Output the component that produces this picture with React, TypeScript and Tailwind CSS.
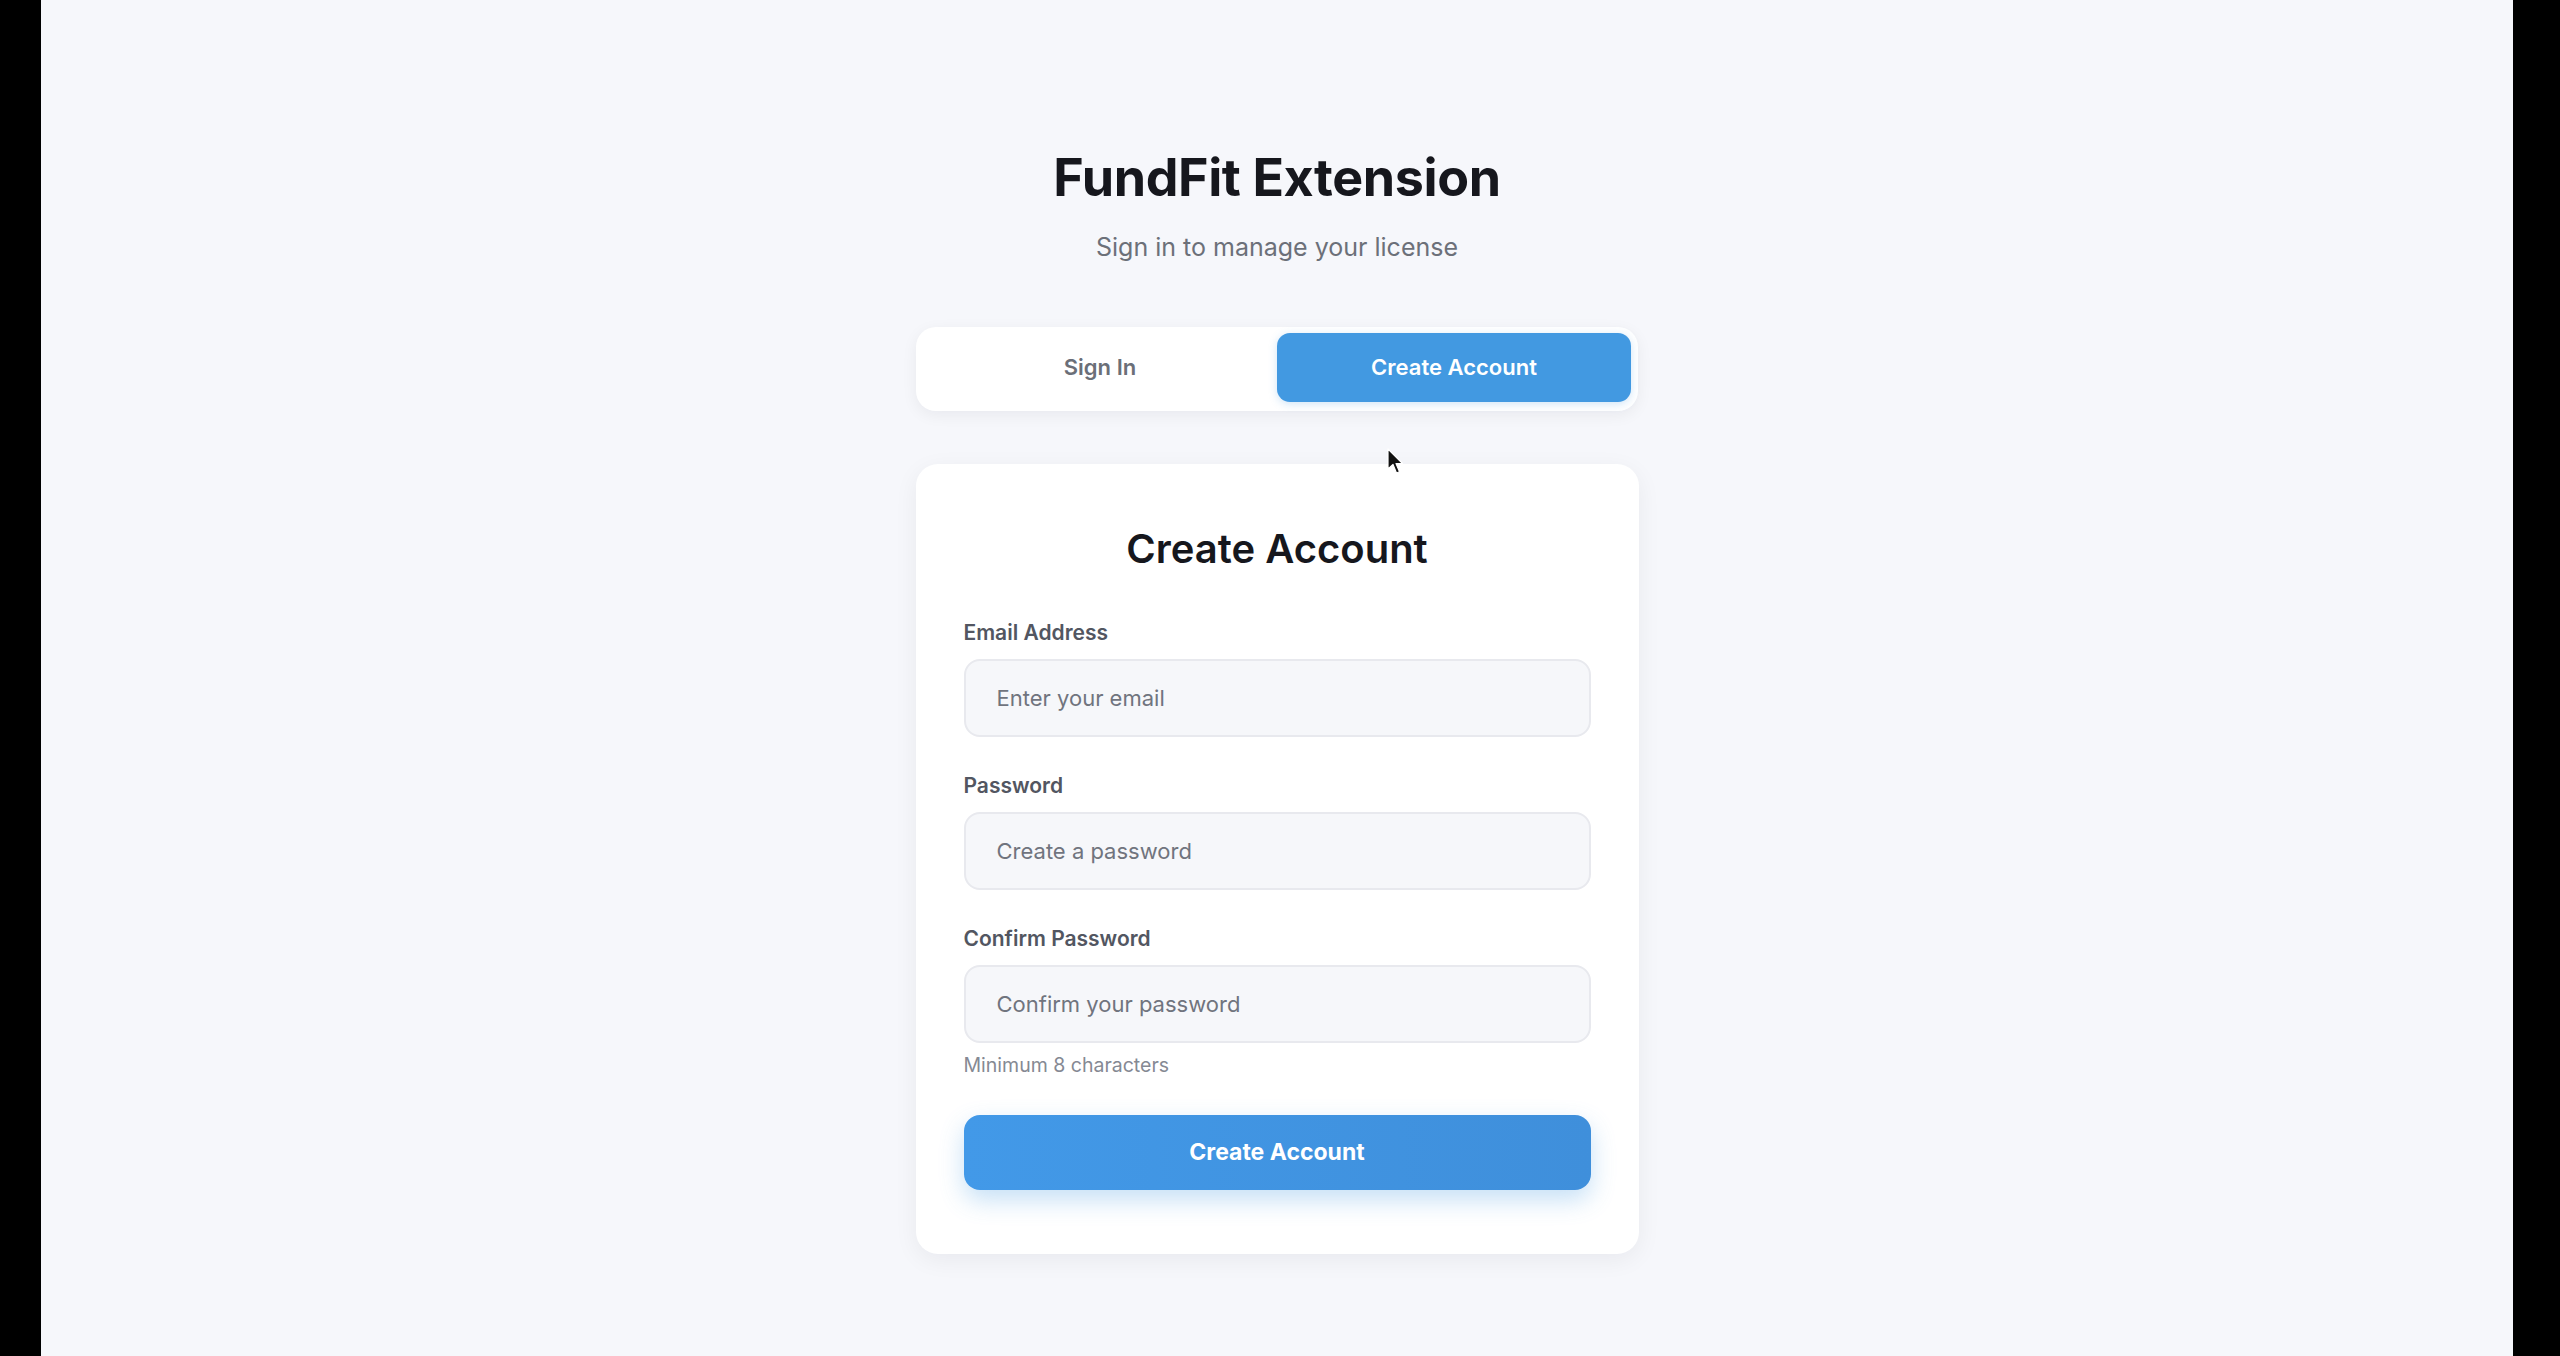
import { useState } from "react";

const Cursor = () => (
  <svg
    className="absolute left-[1346px] top-[448px]"
    width="18"
    height="27"
    viewBox="0 0 18 27"
  >
    <path
      d="M1 1 L1 21 L6 16.5 L9.5 25 L12.5 23.8 L9 15.5 L15.5 15.5 Z"
      fill="#111"
      stroke="#fff"
      strokeWidth="1.2"
      strokeLinejoin="round"
    />
  </svg>
);

const Field = ({ label, placeholder, type = "text", first = false }) => (
  <div className={first ? "mt-[46px]" : "mt-[35px]"}>
    <label className="block text-[21px] leading-[28px] font-semibold text-[#525661]">
      {label}
    </label>
    <input
      type={type}
      placeholder={placeholder}
      className="mt-[12px] w-full h-[78px] px-[31px] rounded-[16px] bg-[#f6f7fa] border-2 border-[#e8e9ee] text-[22px] text-[#1f2937] placeholder:text-[#70747e] outline-none"
    />
  </div>
);

export default function App() {
  const [activeTab, setActiveTab] = useState("create");

  return (
    <div className="flex h-screen font-['Inter',_'Noto_Sans',_sans-serif]">
      <div className="w-[41px] bg-black" />
      <main className="relative flex-1 bg-[#f6f7fb] flex flex-col items-center pt-[147px]">
        <h1 className="text-[52px] leading-[62px] font-bold text-[#16171d] tracking-[-0.4px]">
          FundFit Extension
        </h1>
        <p className="mt-[22px] text-[25px] leading-[32px] text-[#6c7079]">
          Sign in to manage your license
        </p>

        <div className="mt-[64px] w-[722px] h-[84px] px-[7px] pt-[6px] pb-[9px] flex rounded-[20px] bg-white shadow-[0_4px_16px_rgba(15,23,42,0.06)]">
          {[
            ["signin", "Sign In"],
            ["create", "Create Account"],
          ].map(([key, text]) => (
            <button
              key={key}
              onClick={() => setActiveTab(key)}
              className={`flex-1 rounded-[13px] text-[22px] font-semibold ${
                activeTab === key
                  ? "bg-[#4299e1] text-white shadow-[0_2px_8px_rgba(66,153,225,0.25)]"
                  : "text-[#6b6f78]"
              }`}
            >
              {text}
            </button>
          ))}
        </div>

        <div className="mt-[53px] w-[723px] rounded-[22px] bg-white px-[48px] pt-[61px] pb-[64px] shadow-[0_6px_24px_rgba(15,23,42,0.06)]">
          <h2 className="text-center text-[40px] leading-[48px] font-semibold text-[#16171d]">
            Create Account
          </h2>

          <Field label="Email Address" placeholder="Enter your email" type="email" first />
          <Field label="Password" placeholder="Create a password" type="password" />
          <Field label="Confirm Password" placeholder="Confirm your password" type="password" />

          <p className="mt-[9px] text-[19.5px] leading-[26px] text-[#858993]">
            Minimum 8 characters
          </p>

          <button className="mt-[37px] w-full h-[75px] rounded-[16px] bg-gradient-to-r from-[#4299e8] to-[#3f8fdb] text-white text-[23px] font-bold shadow-[0_10px_24px_rgba(66,153,225,0.3)]">
            Create Account
          </button>
        </div>

        <Cursor />
      </main>
      <div className="w-[47px] bg-black" />
    </div>
  );
}
